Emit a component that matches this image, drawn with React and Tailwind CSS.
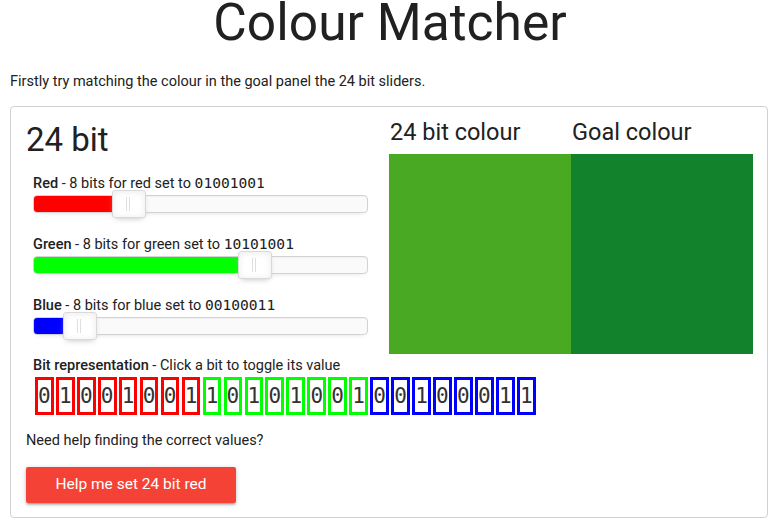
import { useState } from "react";

const toBits = (n) => n.toString(2).padStart(8, "0");

const CHANNELS = [
  { key: "r", name: "Red", word: "red", fill: "bg-[#ff0000]", box: "border-[#ff0000]" },
  { key: "g", name: "Green", word: "green", fill: "bg-[#00ff00]", box: "border-[#00ff00]" },
  { key: "b", name: "Blue", word: "blue", fill: "bg-[#0000ff]", box: "border-[#0000ff]" },
];

function Slider({ value, fill }) {
  // inner track is 333px wide; handle is centred on the value
  const pos = (value / 255) * 333;
  return (
    <div className="relative h-[18px] w-[335px] rounded-[4px] border border-[#d3d3d3] bg-[#fafafa] shadow-[inset_0_1px_1px_#f0f0f0,0_3px_6px_-5px_#bbb]">
      <div className={`absolute left-0 top-0 h-full rounded-l-[3px] ${fill}`} style={{ width: pos }} />
      <div
        className="absolute top-[-6px] h-[28px] w-[34px] rounded-[3px] border border-[#d9d9d9] bg-white shadow-[inset_0_0_1px_#fff,inset_0_1px_7px_#ebebeb,0_3px_6px_-3px_#bbb]"
        style={{ left: pos - 17 }}
      >
        <span className="absolute left-[13px] top-[6px] h-[14px] w-px bg-[#e0dfde]" />
        <span className="absolute left-[16px] top-[6px] h-[14px] w-px bg-[#e0dfde]" />
      </div>
    </div>
  );
}

export default function App() {
  const [rgb, setRgb] = useState({ r: 73, g: 169, b: 35 });
  const goal = "#12822c";

  const toggle = (key, i) =>
    setRgb((c) => ({ ...c, [key]: c[key] ^ (1 << (7 - i)) }));

  return (
    <div className="min-h-screen bg-white text-[#212121] font-['Roboto',sans-serif]">
      <h1 className="text-center text-[51.5px] leading-[46px] font-normal">Colour Matcher</h1>

      <p className="mt-[25px] px-[10px] text-[14.5px] leading-[22px]">
        Firstly try matching the colour in the goal panel the 24 bit sliders.
      </p>

      <div className="ml-[10px] mt-[13px] w-[758px] rounded-[4px] border border-[#d1d1d1]">
        <div className="grid grid-cols-2">
          {/* sliders + bits */}
          <div className="pl-[15px] pb-[14px]">
            <h2 className="pt-[13px] text-[33px] leading-[40px] font-normal">24 bit</h2>

            <div className="pl-[7px]">
              {CHANNELS.map((ch, idx) => (
                <div key={ch.key} className={idx === 0 ? "mt-[13px]" : "mt-[21px]"}>
                  <div className="text-[14.5px] leading-[20px]">
                    <span className="font-medium">{ch.name}</span> - 8 bits for {ch.word} set to{" "}
                    <span className="font-['DejaVu_Sans_Mono',monospace] text-[14.6px]">{toBits(rgb[ch.key])}</span>
                  </div>
                  <div className="mt-[1px]">
                    <Slider value={rgb[ch.key]} fill={ch.fill} />
                  </div>
                </div>
              ))}

              <div className="mt-[21px] text-[14.5px] leading-[20px]">
                <span className="font-medium">Bit representation</span> - Click a bit to toggle its value
              </div>
              <div className="ml-[2px] mt-[1px] flex gap-[2.3px]">
                {CHANNELS.map((ch) =>
                  toBits(rgb[ch.key]).split("").map((b, i) => (
                    <button
                      key={ch.key + i}
                      onClick={() => toggle(ch.key, i)}
                      className={`h-[38px] border-[3px] ${ch.box} font-['DejaVu_Sans_Mono',monospace] text-[21px] leading-[32px] text-[#333]`}
                    >
                      {b}
                    </button>
                  ))
                )}
              </div>
            </div>

            <p className="mt-[15px] text-[14.5px] leading-[22px]">Need help finding the correct values?</p>
            <button className="mt-[15px] h-[36px] w-[210px] rounded-[2px] bg-[#f44336] text-[15.5px] text-white shadow-[0_2px_2px_0_rgba(0,0,0,0.14),0_3px_1px_-2px_rgba(0,0,0,0.12),0_1px_5px_0_rgba(0,0,0,0.2)]">
              Help me set 24 bit red
            </button>
          </div>

          {/* colour panels */}
          <div className="pr-[14px]">
            <div className="grid grid-cols-2 pt-[11px]">
              <h3 className="pl-px text-[23.5px] leading-[28px] font-normal">24 bit colour</h3>
              <h3 className="pl-px text-[23.5px] leading-[28px] font-normal">Goal colour</h3>
            </div>
            <div className="mt-[8px] grid h-[200px] grid-cols-2">
              <div style={{ backgroundColor: `rgb(${rgb.r},${rgb.g},${rgb.b})` }} />
              <div style={{ backgroundColor: goal }} />
            </div>
          </div>
        </div>
      </div>
    </div>
  );
}
